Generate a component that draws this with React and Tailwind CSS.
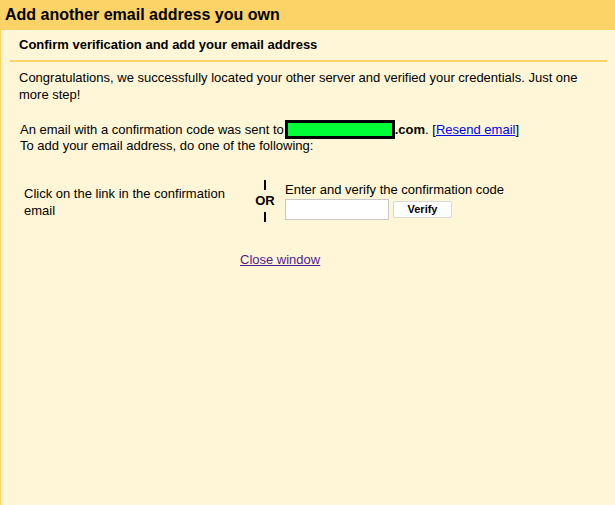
import React from 'react';

const App = () => {
  return (
    <div className="w-[615px] h-[505px] bg-[#fff6d7] font-['Liberation_Sans',Arial,sans-serif] text-black flex flex-col overflow-hidden">
      {/* Title bar */}
      <div className="h-[30px] bg-[#fbd366] px-[5px] flex items-center">
        <h1 className="text-[16px] font-bold leading-none">Add another email address you own</h1>
      </div>

      <div className="flex-1 border-l border-[#fbd366] pl-[9px] pr-[8px]">
        <div className="border-b-2 border-[#fbd366] h-[32px] flex items-center pl-[9px]">
          <h2 className="text-[13px] font-bold">Confirm verification and add your email address</h2>
        </div>

        <div className="pl-[9px] pr-[4px] text-[13px] leading-[17px]">
          <p className="mt-[7px]">
            Congratulations, we successfully located your other server and verified your credentials. Just one more step!
          </p>

          <div className="mt-[17px] pl-px">
            <div className="flex items-center">
              <span>An email with a confirmation code was sent to </span>
              <span className="inline-block ml-px w-[110px] h-[19px] bg-[#00ff37] border-[3px] border-black"></span>
              <span className="font-bold">.com</span>
              <span>. [</span>
              <a href="#" className="text-[#0000ee] underline">Resend email</a>
              <span>]</span>
            </div>
            <p className="-mt-[2px]">To add your email address, do one of the following:</p>
          </div>

          <div className="mt-[26px] flex items-center">
            <div className="w-[227px] pl-[5px] pt-[2px]">
              Click on the link in the confirmation email
            </div>
            <div className="w-[38px] flex flex-col items-center">
              <span className="w-[2px] h-[10px] bg-black"></span>
              <span className="font-bold text-[13px] leading-[22px]">OR</span>
              <span className="w-[2px] h-[10px] bg-black"></span>
            </div>
            <div className="pl-[1px]">
              <p className="leading-[16px]">Enter and verify the confirmation code</p>
              <div className="flex items-center mt-[1px]">
                <input type="text" className="w-[104px] h-[21px] bg-white border border-[#c8c8c8]" />
                <button className="ml-[4px] w-[59px] h-[17px] bg-white border border-[#d9d9d9] rounded-[2px] text-[11px] font-bold leading-none">
                  Verify
                </button>
              </div>
            </div>
          </div>

          <div className="mt-[29px] pl-[221px]">
            <a href="#" className="text-[#551a8b] underline">Close window</a>
          </div>
        </div>
      </div>
    </div>
  );
};

export default App;
